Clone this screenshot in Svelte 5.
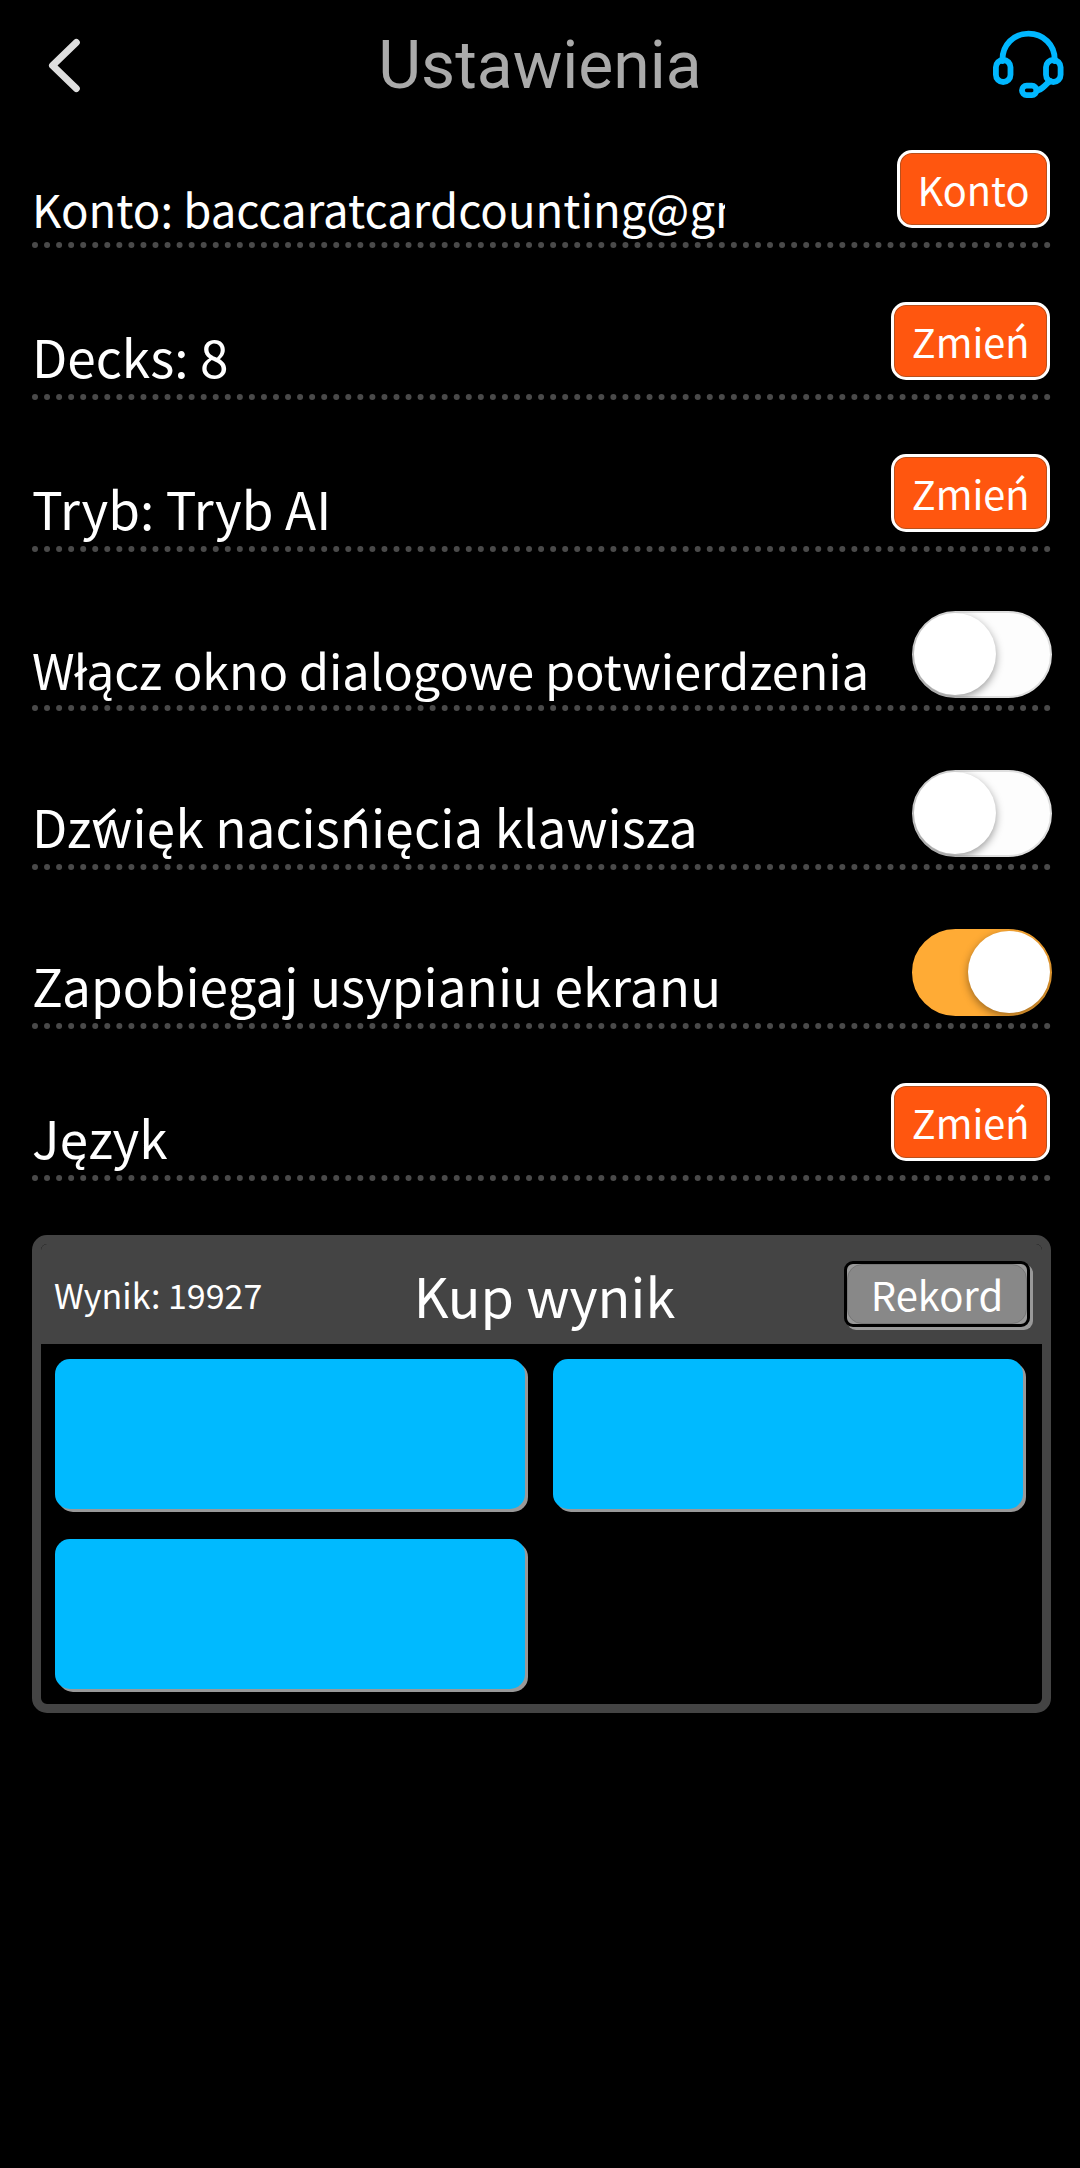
<script>
  let rows = $state([
    { label: 'Konto: baccaratcardcounting@gm', size: 'account', action: 'Konto' },
    { label: 'Decks: 8', action: 'Zmień' },
    { label: 'Tryb: Tryb AI', action: 'Zmień' },
    { label: 'Włącz okno dialogowe potwierdzenia', size: 'long', on: false },
    { label: 'Dźwięk naciśnięcia klawisza', parts: ['Dz', 'w', 'ięk nacis', 'n', 'ięcia klawisza'], on: false },
    { label: 'Zapobiegaj usypianiu ekranu', on: true },
    { label: 'Język', action: 'Zmień' }
  ]);
  const offers = [1, 2, 3];
</script>

<header>
  <button class="icon back" aria-label="Wstecz">
    <svg width="40" height="60" viewBox="0 0 40 60">
      <path d="M31.3 6.5 L7.5 29.5 L31.3 52.5" />
    </svg>
  </button>
  <h1>Ustawienia</h1>
  <button class="icon support" aria-label="Pomoc">
    <svg width="76" height="76" viewBox="0 0 76 76">
      <path d="M12.5 33 V31.5 C12.5 17 23.5 5.7 38.5 5.7 S64.7 17 64.7 31.5 V33" />
      <rect x="5.9" y="32" width="14.6" height="22" rx="7.3" />
      <rect x="56" y="32" width="14.6" height="22" rx="7.3" />
      <rect x="32" y="57.7" width="14.5" height="9.4" rx="4.6" />
      <path d="M46.5 62.5 C53 62 54 57 60.5 53" />
    </svg>
  </button>
</header>

<main>
  {#each rows as row}
    <div class="row" class:toggle-row={row.on !== undefined}>
      <span class="label {row.size ?? ''}">
        {#if row.parts}
          {#each row.parts as part, i}{#if i % 2}<span class="accented">{part}</span>{:else}{part}{/if}{/each}
        {:else}{row.label}{/if}
      </span>
      {#if row.action}
        <button class="action">{row.action}</button>
      {:else}
        <button class="switch" class:on={row.on} role="switch" aria-checked={row.on} aria-label={row.label} onclick={() => (row.on = !row.on)}>
          <i></i>
        </button>
      {/if}
    </div>
  {/each}

  <section>
    <div class="head">
      <span class="score">Wynik: 19927</span>
      <h2>Kup wynik</h2>
      <button class="record"><span>Rekord</span></button>
    </div>
    <div class="offers">
      {#each offers as offer (offer)}
        <div class="offer"></div>
      {/each}
    </div>
  </section>
</main>

<style>
  :global(body) {
    background: #000;
  }
  header,
  main {
    font-family: 'Noto Sans CJK SC', 'Noto Sans', sans-serif;
    color: #fff;
  }
  button {
    font: inherit;
    color: inherit;
    padding: 0;
    box-sizing: border-box;
    flex: none;
  }
  header {
    height: 96px;
    display: grid;
    grid-template-columns: 120px 1fr 120px;
    align-items: start;
  }
  h1 {
    margin: 0;
    padding-top: 26px;
    text-align: center;
    font: 400 66px/80px Roboto, sans-serif;
    color: #aaa;
  }
  .icon {
    background: none;
    border: 0;
    display: flex;
  }
  .icon svg {
    fill: none;
    stroke-linecap: round;
    stroke-linejoin: round;
  }
  .back {
    padding: 36px 0 0 45px;
  }
  .back svg {
    stroke: #dedede;
    stroke-width: 7;
  }
  .support {
    justify-content: flex-end;
    padding: 28px 14px 0 0;
  }
  .support svg {
    stroke: #00b7ff;
    stroke-width: 5.8;
  }
  main {
    padding: 0 29px 0 32px;
  }
  .row {
    box-sizing: border-box;
    height: 152px;
    border-bottom: 6px dotted #4a4a4a;
    display: flex;
    justify-content: space-between;
    align-items: flex-end;
  }
  .toggle-row {
    height: 159px;
  }
  .label {
    font-size: 51.3px;
    line-height: 1.448;
    white-space: nowrap;
    margin-bottom: 1px;
  }
  .account {
    font-size: 45.5px;
    width: 693px;
    overflow: hidden;
    margin-bottom: 0;
  }
  .long {
    font-size: 48.5px;
  }
  /* long detached acute that leans across the letter */
  .accented {
    position: relative;
  }
  .accented::after {
    content: '';
    position: absolute;
    left: 4px;
    bottom: 44px;
    width: 23px;
    height: 4px;
    border-radius: 1px;
    background: #fff;
    transform: rotate(-42deg);
  }
  .action {
    height: 78px;
    padding: 0 17.5px;
    margin: 0 1px 14px 0;
    border: 3px solid #fff;
    border-radius: 15px;
    background: #ff560f;
    box-shadow: inset 0 0 0 1px #b9501c;
    font-size: 39.7px;
    line-height: 72px;
  }
  .switch {
    width: 140px;
    height: 87px;
    margin: 0 -1px 7px 0;
    border: 2.7px solid #dfdfdf;
    border-radius: 44px;
    background: #fdfdfd;
    display: flex;
  }
  .switch i {
    width: 82px;
    height: 82px;
    border-radius: 50%;
    background: #fff;
    box-shadow: 0 3px 8px rgba(0, 0, 0, 0.4);
  }
  .switch.on {
    justify-content: flex-end;
    background: #ffab35;
    border-color: #ffab35;
  }
  section {
    box-sizing: border-box;
    margin-top: 54px;
    height: 478px;
    border: 9px solid #444;
    border-radius: 15px;
    overflow: hidden;
  }
  .head {
    height: 100px;
    background: #444;
    display: grid;
    grid-template-columns: 1fr auto 1fr;
    align-items: center;
    padding: 0 10px 0 13px;
  }
  .score {
    padding-top: 2px;
    font-size: 34px;
    line-height: 52px;
  }
  h2 {
    margin: 0;
    padding: 2px 0 0 3px;
    font-size: 54px;
    font-weight: 400;
    line-height: 80px;
  }
  .record {
    justify-self: end;
    width: 186px;
    height: 66px;
    margin-right: 2px;
    border: 3px solid #000;
    border-radius: 9px;
    background: #999;
    box-shadow: 3px 3px 0 #999;
    font-size: 40px;
    line-height: 59px;
  }
  .record span {
    display: block;
    box-sizing: border-box;
    height: 60px;
    border: 1px solid #777;
    border-radius: 15px;
    background: #888;
  }
  .offers {
    display: grid;
    grid-template-columns: 470px 470px;
    grid-auto-rows: 150px;
    gap: 30px 28px;
    padding: 15px 14px;
  }
  .offer {
    border-radius: 15px;
    background: #00baff;
    box-shadow: 3px 3px 0 #999;
  }
</style>
